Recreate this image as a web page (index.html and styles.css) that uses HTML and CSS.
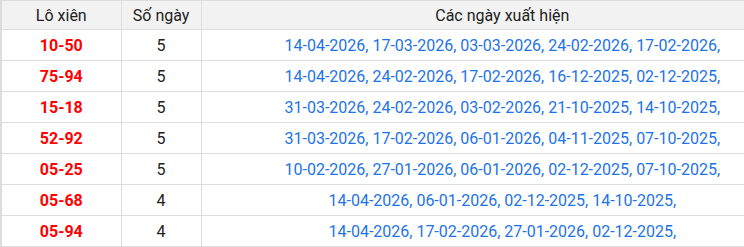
FILE: index.html
```html
<!DOCTYPE html>
<html>
<head>
<meta charset="utf-8">
<link rel="stylesheet" href="styles.css">
</head>
<body>
<div class="wrap">
<table class="tbl">
  <colgroup><col class="c1"><col class="c2"><col class="c3"></colgroup>
  <thead>
    <tr><th>Lô xiên</th><th>Số ngày</th><th>Các ngày xuất hiện</th></tr>
  </thead>
  <tbody>
    <tr><td class="pair">10-50</td><td>5</td><td class="dates">14-04-2026, 17-03-2026, 03-03-2026, 24-02-2026, 17-02-2026,</td></tr>
    <tr><td class="pair">75-94</td><td>5</td><td class="dates">14-04-2026, 24-02-2026, 17-02-2026, 16-12-2025, 02-12-2025,</td></tr>
    <tr><td class="pair">15-18</td><td>5</td><td class="dates">31-03-2026, 24-02-2026, 03-02-2026, 21-10-2025, 14-10-2025,</td></tr>
    <tr><td class="pair">52-92</td><td>5</td><td class="dates">31-03-2026, 17-02-2026, 06-01-2026, 04-11-2025, 07-10-2025,</td></tr>
    <tr><td class="pair">05-25</td><td>5</td><td class="dates">10-02-2026, 27-01-2026, 06-01-2026, 02-12-2025, 07-10-2025,</td></tr>
    <tr><td class="pair">05-68</td><td>4</td><td class="dates">14-04-2026, 06-01-2026, 02-12-2025, 14-10-2025,</td></tr>
    <tr><td class="pair">05-94</td><td>4</td><td class="dates">14-04-2026, 17-02-2026, 27-01-2026, 02-12-2025,</td></tr>
  </tbody>
</table>
</div>
</body>
</html>
```
FILE: styles.css
```css
html, body {
  margin: 0;
  padding: 0;
  background: #fff;
}
body {
  font-family: Roboto, "Liberation Sans", sans-serif;
  font-size: 16px;
  color: #222;
}
.wrap {
  width: 744px;
  overflow: hidden;
}
.tbl {
  border-collapse: collapse;
  width: 804px;
  table-layout: fixed;
  border-left: 2px solid #ddd;
  border-bottom: 2px solid #ddd;
}
.c1 { width: 120px; }
.c2 { width: 80px; }
.c3 { width: 602px; }
.tbl th, .tbl td {
  border: 1px solid #ddd;
  text-align: center;
  padding: 0;
  white-space: nowrap;
}
.tbl th {
  background: #f2f2f2;
  font-weight: 400;
  height: 28px;
  color: #222;
}
.tbl td {
  height: 30px;
}
.tbl .pair {
  color: #ff0000;
  font-weight: 700;
}
.tbl .dates {
  color: #1e73e6;
}
```
